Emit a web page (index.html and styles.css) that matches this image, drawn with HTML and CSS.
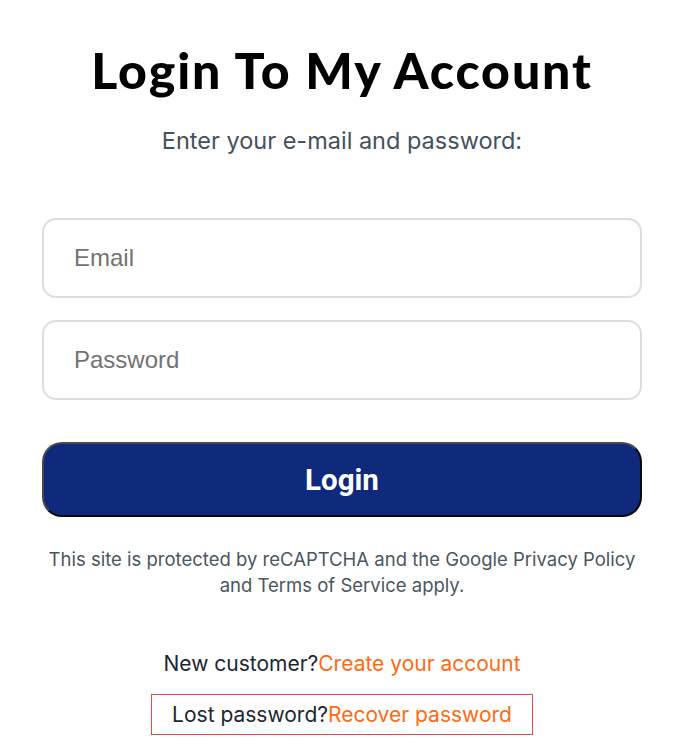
FILE: index.html
```html
<!DOCTYPE html>
<html>
<head>
<meta charset="utf-8">
<link rel="stylesheet" href="styles.css">
</head>
<body>
<div class="page">
  <h1 class="title">Login To My Account</h1>
  <p class="subtitle">Enter your e-mail and password:</p>
  <form class="form">
    <input class="field" type="email" placeholder="Email">
    <input class="field" type="password" placeholder="Password">
    <button class="btn" type="button">Login</button>
  </form>
  <p class="note">This site is protected by reCAPTCHA and the Google Privacy Policy<br>and Terms of Service apply.</p>
  <p class="link-row new">New customer?<a class="link" href="#">Create your account</a></p>
  <div class="link-row lost"><span>Lost password?<a class="link" href="#">Recover password</a></span></div>
</div>
</body>
</html>
```
FILE: styles.css
```css
* { box-sizing: border-box; }
html, body { margin: 0; padding: 0; background: #fff; }
.page {
  width: 684px;
  padding: 40px 42px 0;
  display: flex;
  flex-direction: column;
  align-items: center;
  font-family: Inter, "Noto Sans", sans-serif;
}
.title {
  margin: 0;
  font-family: Lato, "Noto Sans", sans-serif;
  font-weight: 900;
  font-size: 50px;
  line-height: 60px;
  color: #000;
  letter-spacing: 1.9px;
  white-space: nowrap;
}
.subtitle {
  margin: 25px 0 0;
  font-size: 23.5px;
  line-height: 32px;
  color: #43525e;
}
.form {
  width: 100%;
  margin-top: 61px;
  display: flex;
  flex-direction: column;
  gap: 22px;
}
.field {
  width: 100%;
  height: 80px;
  border: 2px solid #dedede;
  border-radius: 14px;
  padding: 0 30px;
  font-family: "Liberation Sans", Arial, sans-serif;
  font-size: 24px;
  color: #333;
  outline: none;
  background: #fff;
}
.field::placeholder { color: #737373; }
.btn {
  margin-top: 20px;
  height: 75px;
  width: 100%;
  background: #0f2a7c;
  border: 2px solid #0a0a0a;
  border-top-color: #4a4a4a;
  border-left-color: #4a4a4a;
  border-radius: 20px;
  color: #fff;
  font-family: Roboto, sans-serif;
  font-weight: 700;
  font-size: 29.5px;
}
.note {
  margin: 29px 0 0;
  text-align: center;
  font-size: 18.5px;
  line-height: 26px;
  color: #4a5660;
  white-space: nowrap;
}
.link-row {
  margin: 0;
  font-size: 21px;
  line-height: 30px;
  color: #1b2733;
  white-space: nowrap;
}
.new { margin-top: 51px; }
.link { color: #ff6a10; text-decoration: none; }
.lost {
  margin-top: 15px;
  border: 1px solid #e54a4a;
  width: 382px;
  height: 41px;
  display: flex;
  align-items: center;
  justify-content: center;
}
```
